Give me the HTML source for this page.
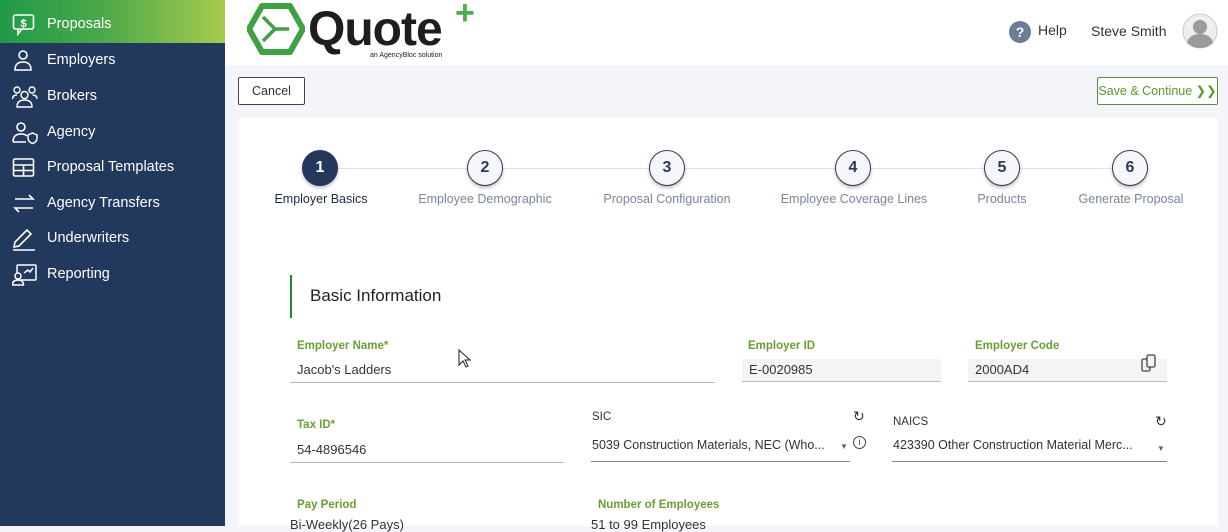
<!DOCTYPE html>
<html><head><style>
*{margin:0;padding:0;box-sizing:border-box}
body{width:1228px;height:526px;overflow:hidden;font-family:"Liberation Sans",sans-serif;background:#f3f5fa;position:relative}
.a{position:absolute}
#side{left:0;top:0;width:225px;height:526px;background:#22385d}
#act{left:0;top:0;width:225px;height:43px;background:linear-gradient(90deg,#1f9a48 0%,#4ba84a 45%,#a7cb4e 100%)}
.ni{color:#fff;font-size:14.5px;left:47px}
.ic{left:12px;width:26px;height:24px}
#hdr{left:225px;top:0;width:1003px;height:65px;background:#fff}
.btn{border:1px solid #444;border-radius:2px;background:#fff;font-size:12.5px;text-align:center}
#card{left:239px;top:118px;width:979px;height:408px;background:#fff}
.c{width:36px;height:36px;border-radius:50%;border:1.5px solid #2b3a55;background:#f4f6fa;text-align:center;line-height:33px;font-size:16px;font-weight:bold;color:#2b3a55;box-shadow:0 2px 3px rgba(0,0,0,.25)}
.sl{font-size:12.5px;color:#7a8599;top:192px;white-space:nowrap;transform:translateX(-50%)}
.lab{font-size:11.5px;color:#6aa033;font-weight:bold}
.lab2{font-size:11.5px;color:#333}
.val{font-size:13px;color:#333}
.ul{height:1px;background:#bbb}
</style></head><body>
<div id="side" class="a"></div>
<div id="act" class="a"></div>
<svg class="a ic" style="top:13px" viewBox="0 0 26 24"><rect x="1.5" y="2" width="20" height="14" rx="2" fill="none" stroke="#fff" stroke-width="1.6"/><path d="M6 16v5l4-5" fill="none" stroke="#fff" stroke-width="1.6"/><text x="11.5" y="14" font-size="11" fill="#fff" text-anchor="middle" font-family="Liberation Sans" font-weight="bold">$</text></svg>
<div class="a ni" style="top:16px">Proposals</div>
<svg class="a ic" style="top:49px" viewBox="0 0 26 24"><circle cx="11" cy="6" r="4" fill="none" stroke="#fff" stroke-width="1.6"/><path d="M3 21q0-8 8-8t8 8z" fill="none" stroke="#fff" stroke-width="1.6"/></svg>
<div class="a ni" style="top:52px">Employers</div>
<svg class="a ic" style="top:85px" viewBox="0 0 26 24"><circle cx="5" cy="5" r="3" fill="none" stroke="#fff" stroke-width="1.4"/><circle cx="20" cy="5" r="3" fill="none" stroke="#fff" stroke-width="1.4"/><circle cx="12.5" cy="10" r="3.5" fill="none" stroke="#fff" stroke-width="1.4"/><path d="M5 22q0-7 7.5-7t7.5 7zM0.5 14q0-4 4.5-4M25 14q0-4-4.5-4" fill="none" stroke="#fff" stroke-width="1.4"/></svg>
<div class="a ni" style="top:88px">Brokers</div>
<svg class="a ic" style="top:121px" viewBox="0 0 26 24"><circle cx="9" cy="6" r="4" fill="none" stroke="#fff" stroke-width="1.6"/><path d="M1 21q0-8 8-8 4 0 6 2M1 21h13" fill="none" stroke="#fff" stroke-width="1.6"/><path d="M16 14l4.5-2 4.5 2v3q0 4-4.5 5.5-4.5-1.5-4.5-5.5z" fill="none" stroke="#fff" stroke-width="1.5"/></svg>
<div class="a ni" style="top:124px">Agency</div>
<svg class="a ic" style="top:157px" viewBox="0 0 26 24"><rect x="1.5" y="2" width="20" height="17" rx="1.5" fill="none" stroke="#fff" stroke-width="1.6"/><path d="M1.5 8h20M1.5 13.5h20M11.5 8v11" stroke="#fff" stroke-width="1.6"/></svg>
<div class="a ni" style="top:159px">Proposal Templates</div>
<svg class="a ic" style="top:192px" viewBox="0 0 26 24"><path d="M3 7h18l-4-4M21 16H3l4 4" fill="none" stroke="#fff" stroke-width="1.6"/></svg>
<div class="a ni" style="top:195px">Agency Transfers</div>
<svg class="a ic" style="top:227px" viewBox="0 0 26 24"><path d="M2 20l1-5L15 3l4 4L7 19zM1 23h22" fill="none" stroke="#fff" stroke-width="1.6"/></svg>
<div class="a ni" style="top:230px">Underwriters</div>
<svg class="a ic" style="top:263px" viewBox="0 0 26 24"><rect x="5" y="2" width="19" height="15" rx="1" fill="none" stroke="#fff" stroke-width="1.5"/><circle cx="6" cy="13" r="3" fill="#22385d" stroke="#fff" stroke-width="1.5"/><path d="M0.5 22q0-5 5.5-5t5.5 5zM12 10l4-3 2 2 3-4" fill="none" stroke="#fff" stroke-width="1.5"/></svg>
<div class="a ni" style="top:266px">Reporting</div>

<div id="hdr" class="a"></div>
<svg class="a" style="left:247px;top:3px" width="58" height="52" viewBox="0 0 58 52"><path d="M15 3h28l13 23-13 23H15L2 26z" fill="none" stroke="#3fa142" stroke-width="6" stroke-linejoin="round"/><path d="M16 14l12 12-12 12M28 26h14" fill="none" stroke="#3fa142" stroke-width="3.5"/></svg>
<div class="a" style="left:308px;top:2px;font-size:48px;font-weight:bold;color:#1e1e1e;letter-spacing:-1px">Quote</div>
<div class="a" style="left:455px;top:-6px;font-size:34px;font-weight:bold;color:#4cae4c">+</div>
<div class="a" style="left:370px;top:52px;font-size:7px;color:#222">an AgencyBloc solution</div>
<div class="a" style="left:1009px;top:21px;width:22px;height:22px;border-radius:50%;background:#6b7d93;color:#fff;font-weight:bold;text-align:center;line-height:22px;font-size:14px">?</div>
<div class="a" style="left:1038px;top:22px;font-size:14px;color:#333">Help</div>
<div class="a" style="left:1091px;top:23px;font-size:14px;color:#333">Steve Smith</div>
<svg class="a" style="left:1182px;top:13px" width="36" height="36" viewBox="0 0 36 36"><circle cx="18" cy="18" r="17" fill="#eee" stroke="#ccc"/><circle cx="18" cy="14" r="7" fill="#9a9a9a"/><path d="M5 30q2-9 13-9t13 9q-5 5-13 5t-13-5z" fill="#9a9a9a"/></svg>

<div class="a btn" style="left:238px;top:77px;width:67px;height:28px;line-height:26px;color:#333">Cancel</div>
<div class="a btn" style="left:1097px;top:77px;width:121px;height:28px;line-height:26px;color:#5a9a28;border-color:#5a8a3a">Save &amp; Continue ❯❯</div>

<div id="card" class="a"></div>
<div class="a" style="left:330px;top:168px;width:800px;height:1px;background:#dde1e7"></div>
<div class="a c" style="left:302px;top:150px;background:#23385c;border-color:#23385c;color:#fff">1</div>
<div class="a c" style="left:467px;top:150px">2</div>
<div class="a c" style="left:649px;top:150px">3</div>
<div class="a c" style="left:835px;top:150px">4</div>
<div class="a c" style="left:984px;top:150px">5</div>
<div class="a c" style="left:1112px;top:150px">6</div>
<div class="a sl" style="left:321px;color:#1e2a3e">Employer Basics</div>
<div class="a sl" style="left:485px">Employee Demographic</div>
<div class="a sl" style="left:667px">Proposal Configuration</div>
<div class="a sl" style="left:854px">Employee Coverage Lines</div>
<div class="a sl" style="left:1002px">Products</div>
<div class="a sl" style="left:1131px">Generate Proposal</div>

<div class="a" style="left:290px;top:275px;width:2px;height:43px;background:#1f8a3d"></div>
<div class="a" style="left:310px;top:286px;font-size:17px;color:#222">Basic Information</div>

<div class="a lab" style="left:297px;top:340px">Employer Name*</div>
<div class="a val" style="left:297px;top:362px">Jacob's Ladders</div>
<div class="a ul" style="left:290px;top:382px;width:425px"></div>
<div class="a lab" style="left:748px;top:340px">Employer ID</div>
<div class="a" style="left:742px;top:359px;width:199px;height:23px;background:#f3f4f6;border-bottom:1px solid #bbb"></div>
<div class="a val" style="left:749px;top:362px">E-0020985</div>
<div class="a lab" style="left:975px;top:340px">Employer Code</div>
<div class="a" style="left:968px;top:359px;width:199px;height:23px;background:#f3f4f6;border-bottom:1px solid #bbb"></div>
<div class="a val" style="left:975px;top:362px">2000AD4</div>
<svg class="a" style="left:1140px;top:353px" width="22" height="20" viewBox="0 0 22 20"><rect x="2" y="6" width="8" height="12" rx="1.5" fill="none" stroke="#444" stroke-width="1.3"/><rect x="7" y="2" width="8" height="12" rx="1.5" fill="#f3f4f6" stroke="#444" stroke-width="1.3"/></svg>

<div class="a lab" style="left:297px;top:419px">Tax ID*</div>
<div class="a val" style="left:297px;top:442px">54-4896546</div>
<div class="a ul" style="left:290px;top:462px;width:274px"></div>
<div class="a lab2" style="left:592px;top:411px">SIC</div>
<div class="a" style="left:853px;top:408px;font-size:14px;color:#333">↻</div>
<div class="a val" style="left:592px;top:438px;font-size:12.5px">5039 Construction Materials, NEC (Who...</div>
<div class="a" style="left:840px;top:442px;font-size:8px;color:#666">▼</div>
<div class="a" style="left:853px;top:436px;width:13px;height:13px;border:1px solid #444;border-radius:50%;font-size:9px;text-align:center;line-height:11px;color:#444">i</div>
<div class="a ul" style="left:591px;top:461px;width:259px;background:#888"></div>
<div class="a lab2" style="left:893px;top:416px">NAICS</div>
<div class="a" style="left:1155px;top:413px;font-size:14px;color:#333">↻</div>
<div class="a val" style="left:893px;top:438px;font-size:12.5px">423390 Other Construction Material Merc...</div>
<div class="a" style="left:1157px;top:444px;font-size:8px;color:#666">▼</div>
<div class="a ul" style="left:892px;top:461px;width:275px;background:#888"></div>

<div class="a lab" style="left:297px;top:499px">Pay Period</div>
<div class="a val" style="left:290px;top:517px">Bi-Weekly(26 Pays)</div>
<div class="a lab" style="left:598px;top:499px">Number of Employees</div>
<div class="a val" style="left:591px;top:517px">51 to 99 Employees</div>

<svg class="a" style="left:458px;top:349px" width="14" height="20" viewBox="0 0 14 20"><path d="M1 1v15l4-4 3 6 2-1-3-6h5z" fill="#fff" stroke="#222" stroke-width="1"/></svg>
</body></html>
